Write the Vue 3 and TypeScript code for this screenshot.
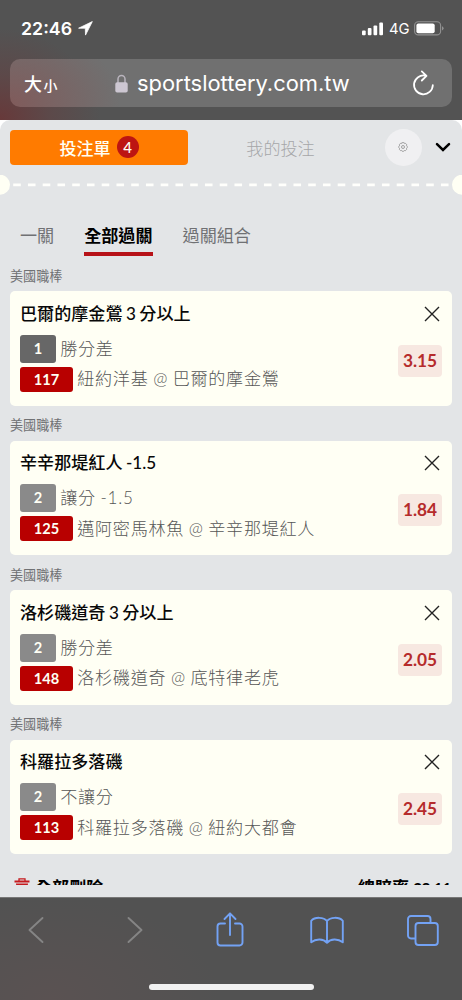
<script setup lang="ts">
interface Bet {
  title: string
  line: string
  market: string
  code: string
  match: string
  odds: string
  first?: boolean
}

const bets: Bet[] = [
  { title: '巴爾的摩金鶯 3 分以上', line: '1', market: '勝分差', code: '117', match: '紐約洋基 @ 巴爾的摩金鶯', odds: '3.15', first: true },
  { title: '辛辛那堤紅人 -1.5', line: '2', market: '讓分 -1.5', code: '125', match: '邁阿密馬林魚 @ 辛辛那堤紅人', odds: '1.84' },
  { title: '洛杉磯道奇 3 分以上', line: '2', market: '勝分差', code: '148', match: '洛杉磯道奇 @ 底特律老虎', odds: '2.05' },
  { title: '科羅拉多落磯', line: '2', market: '不讓分', code: '113', match: '科羅拉多落磯 @ 紐約大都會', odds: '2.45' },
]
</script>

<template>
  <div class="phone">
    <header class="top">
      <div class="status">
        <span class="time">22:46</span>
        <svg class="loc" width="15" height="15" viewBox="0 0 15 15"><path d="M14.3.6.6 7.2h6.7l.2 6.9z" fill="#fff" stroke="#fff" stroke-width=".8" stroke-linejoin="round" /></svg>
        <svg class="signal" width="22" height="14" viewBox="0 0 22 14" fill="#fff">
          <rect x="0" y="8.5" width="3.7" height="4.8" rx="1" /><rect x="5.8" y="6" width="3.7" height="7.3" rx="1" />
          <rect x="11.5" y="3.4" width="3.7" height="9.9" rx="1" /><rect x="17.3" y=".4" width="3.7" height="12.9" rx="1" />
        </svg>
        <span class="net">4G</span>
        <svg class="battery" width="30" height="15" viewBox="0 0 30 15">
          <rect x=".6" y=".7" width="26" height="13.2" rx="3.7" fill="none" stroke="#929292" stroke-width="1.1" />
          <rect x="2.4" y="2.4" width="18.3" height="9.8" rx="2" fill="#fff" />
          <path d="M28 5.2q1.6.5 1.6 2.1T28 9.4z" fill="#929292" />
        </svg>
      </div>
      <div class="address">
        <span class="size"><b>大</b><i>小</i></span>
        <div class="url">
          <svg width="13" height="19" viewBox="0 0 13 19"><path d="M3 9V5a3.5 3.5 0 0 1 7 0v4" fill="none" stroke="#b9b4bd" stroke-width="1.5" /><rect x=".3" y="8.2" width="12.4" height="10.3" rx="1.8" fill="#cdc7d2" /></svg>
          <span>sportslottery.com.tw</span>
        </div>
        <svg class="reload" width="23" height="27" viewBox="0 0 23 27" fill="none" stroke="#fff" stroke-width="1.8" stroke-linecap="round" stroke-linejoin="round"><path d="M13.4 5.7A9.4 9.4 0 1 0 20.8 15.2M9.8 1.4l4.7 4.4-4.7 4.7" /></svg>
      </div>
    </header>

    <div class="page">
      <main class="sheet">
        <nav class="main-tabs">
          <div class="slip">投注單<span class="count">4</span></div>
          <div class="mine">我的投注</div>
          <div class="gear">
            <svg width="10" height="10" viewBox="0 0 10 10" fill="none" stroke="#999" stroke-width=".9"><path d="M3.8.7h2.4l.4.9 1-.2 1.2 1.4-.3 1 .8.8v1l-.8.7.2 1.1L7.3 8.7l-1-.2-.6.8H4.2l-.6-.9-1.1.2-1.1-1.2.2-1.1-.9-.8v-1l.9-.7-.2-1.1 1-1.3 1.1.2z" /><circle cx="5" cy="5" r="1.5" /></svg>
          </div>
          <svg class="chevron" width="16" height="11" viewBox="0 0 16 11"><path d="m2 2.2 6 5.8 6-5.8" fill="none" stroke="#000" stroke-width="2.5" stroke-linecap="round" /></svg>
        </nav>
        <div class="ticket-edge"><svg width="462" height="20"><path d="M13.2 9.9H450" stroke="#fffffc" stroke-width="2.8" stroke-dasharray="7.6 7.15" /><circle cx="0" cy="9.7" r="10" fill="#fffff4" /><circle cx="462" cy="9.7" r="10" fill="#fffff4" /></svg></div>
        <nav class="modes"><span>一關</span><span class="active">全部過關</span><span>過關組合</span></nav>
        <section v-for="bet in bets" :key="bet.code" class="bet">
          <h3>美國職棒</h3>
          <article class="card">
            <div class="heading">
              <h2>{{ bet.title }}</h2>
              <svg width="16" height="16" viewBox="0 0 16 16"><path d="m1 1 14 14M15 1 1 15" stroke="#222" stroke-width="1.4" /></svg>
            </div>
            <div class="details">
              <div class="rows">
                <div class="row market"><span class="tag line" :class="{ dark: bet.first }">{{ bet.line }}</span><span>{{ bet.market }}</span></div>
                <div class="row"><span class="tag code">{{ bet.code }}</span><span>{{ bet.match }}</span></div>
              </div>
              <span class="odds">{{ bet.odds }}</span>
            </div>
          </article>
        </section>
        <div class="totals">
          <div class="clear"><svg width="16" height="17" viewBox="0 0 16 17"><path d="M5 3V.9h6V3" fill="none" stroke="#c51a1e" stroke-width="1.3" /><path d="M.5 2.6h15v2H.5zM2 5.5h12l-1 11H3z" fill="#c51a1e" /></svg><span>全部刪除</span></div>
          <span class="sum">總賠率 <b>29.11</b></span>
        </div>
      </main>
    </div>

    <footer class="toolbar">
      <div class="tools">
        <svg class="t1" width="18" height="28" viewBox="0 0 18 28"><path d="M15.5 2 2.5 14l13 12" stroke="#858585" /></svg>
        <svg class="t2" width="18" height="28" viewBox="0 0 18 28"><path d="m2.5 2 13 12-13 12" stroke="#858585" /></svg>
        <svg class="t3" width="28" height="36" viewBox="0 0 28 36"><path d="M9 12.5H4.5a3 3 0 0 0-3 3v16a3 3 0 0 0 3 3h19a3 3 0 0 0 3-3v-16a3 3 0 0 0-3-3H19M14 24V2.5M8.5 8 14 2.4 19.5 8" /></svg>
        <svg class="t4" width="34" height="29" viewBox="0 0 34 29"><path d="M17 5C13.8 1 5 .6 1.2 4.8v21.5C6 22.5 13.4 22.6 17 26.8 20.6 22.6 28 22.5 32.8 26.3V4.8C29 .6 20.2 1 17 5v21.5" /></svg>
        <svg class="t5" width="32" height="31" viewBox="0 0 32 31"><path d="M8 23.5H4a3 3 0 0 1-3-3V4a3 3 0 0 1 3-3h16.5a3 3 0 0 1 3 3v4" /><rect x="8.5" y="8" width="22.3" height="22" rx="3" /></svg>
      </div>
      <div class="home"></div>
    </footer>
  </div>
</template>

<style>
body { margin: 0; }
</style>

<style scoped>
* { box-sizing: border-box; }
svg { display: block; flex: none; }
.phone { width: 462px; height: 1000px; overflow: hidden; display: flex; flex-direction: column; font-family: Lato, "Noto Sans CJK TC", sans-serif; }
.top { height: 119.5px; flex: none; background: radial-gradient(ellipse 100px 90px at 0 119px, #67393a 0, #653f4080 50%, transparent 100%), #535353; color: #fff; font-family: Inter, "Noto Sans CJK TC", sans-serif; }
.status { height: 57px; margin-bottom: 2px; padding: 0 18px 0 21px; display: flex; align-items: center; }
.time { font-size: 17.8px; font-weight: 600; width: 57px; }
.loc { margin-right: auto; }
.signal { margin-right: 5px; }
.net { font-size: 14.8px; width: 25px; }
.address { height: 48px; margin: 0 10px; padding: 0 17px 0 14px; display: flex; align-items: center; border-radius: 10px; background: radial-gradient(ellipse 110px 80px at 0 45px, #805b5b, transparent), #707070; }
.size { display: flex; align-items: baseline; gap: 1.5px; width: 91px; }
.size b { font-weight: 500; font-size: 18px; }
.size i { font-style: normal; font-weight: 500; font-size: 14px; }
.url { display: flex; align-items: center; gap: 9px; font-size: 21.9px; flex: 1; }
.page { height: 777.5px; flex: none; background: #fff; }
.sheet { height: 100%; overflow: hidden; border-radius: 10px 10px 0 0; background: #e3e5e7; }
.main-tabs { height: 55px; padding: 0 10px; display: flex; align-items: center; }
.slip { width: 178px; height: 35px; border-radius: 4px; background: #ff7b00; color: #fffff4; display: flex; justify-content: center; align-items: center; gap: 6px; font-size: 17px; font-weight: 500; }
.count { width: 22px; height: 22px; border-radius: 50%; background: #bd1512; font-size: 15px; text-align: center; line-height: 22px; }
.mine { width: 185px; text-align: center; font-size: 17.1px; font-weight: 300; color: #a6a7a9; }
.gear { width: 37px; height: 37px; margin-left: 11.5px; border-radius: 50%; background: #f0f0f2; display: grid; place-items: center; }
.chevron { margin-left: 13px; }
.ticket-edge { height: 20px; }
.modes { height: 41px; margin-top: 21px; padding: 0 20px; display: flex; gap: 30px; align-items: flex-start; font-size: 17.1px; color: #707174; line-height: 40px; }
.modes .active { height: 40.8px; color: #000; font-weight: 700; border-bottom: 4px solid #b71218; }
.bet { height: 149.5px; margin: 0 10px; }
h3 { margin: 0; height: 34.8px; padding-top: 9.3px; line-height: 20px; font-size: 13.1px; font-weight: 400; color: #707174; }
.card { height: 114.7px; padding: 7.5px 10px 0; background: #fffff4; border-radius: 5px; }
.heading { height: 30px; display: flex; align-items: center; justify-content: space-between; padding-right: 2px; }
h2 { margin: 0; font-size: 17.1px; font-weight: 500; line-height: 30px; color: #080808; word-spacing: -.9px; }
.details { display: flex; justify-content: space-between; padding-top: 6px; }
.rows { display: flex; flex-direction: column; gap: 4px; }
.row { height: 25px; display: flex; align-items: center; gap: 4.3px; font-size: 17.1px; font-weight: 300; letter-spacing: .69px; word-spacing: -.6px; color: #565656; line-height: 26px; white-space: nowrap; }
.row.market { height: 28px; }
.tag { border-radius: 3px; color: #fffff4; text-align: center; font-size: 14.6px; font-weight: 700; letter-spacing: 0; }
.line { width: 36px; height: 28px; line-height: 28px; background: #8a8a8a; }
.dark { background: #676767; }
.code { width: 53px; height: 25px; line-height: 25px; background: #b80000; }
.odds { width: 44px; height: 32px; margin-top: 10px; border-radius: 4px; background: #f7e8e1; color: #b52b2b; font-size: 17.3px; font-weight: 700; line-height: 32px; text-align: center; }
.totals { height: 10px; overflow: hidden; margin: 20.5px 11px 0 14px; display: flex; justify-content: space-between; align-items: flex-start; font-size: 17.1px; font-weight: 700; line-height: 26px; color: #000; }
.clear { display: flex; gap: 5px; }
.clear svg { margin-top: 3px; }
.sum { letter-spacing: -.1px; }
.sum b { font-size: 15px; }
.toolbar { flex: 1; background: radial-gradient(ellipse 170px 100px at 50px 100px, #5a5252, transparent), #525252; border-top: 1px solid #777; }
.tools { height: 64px; width: 485px; margin-left: -13px; display: grid; grid-template-columns: repeat(5, 1fr); place-items: center; }
.tools svg { fill: none; stroke: #73a2f4; stroke-width: 1.9; stroke-linecap: round; stroke-linejoin: round; }
.tools .t2 { margin-left: 5px; }
.tools .t3 { margin-bottom: 3px; }
.tools .t5 { margin-right: 1px; }
.home { width: 165px; height: 6px; margin: 22px auto 0; border-radius: 3px; background: #f1f1f1; }
</style>
